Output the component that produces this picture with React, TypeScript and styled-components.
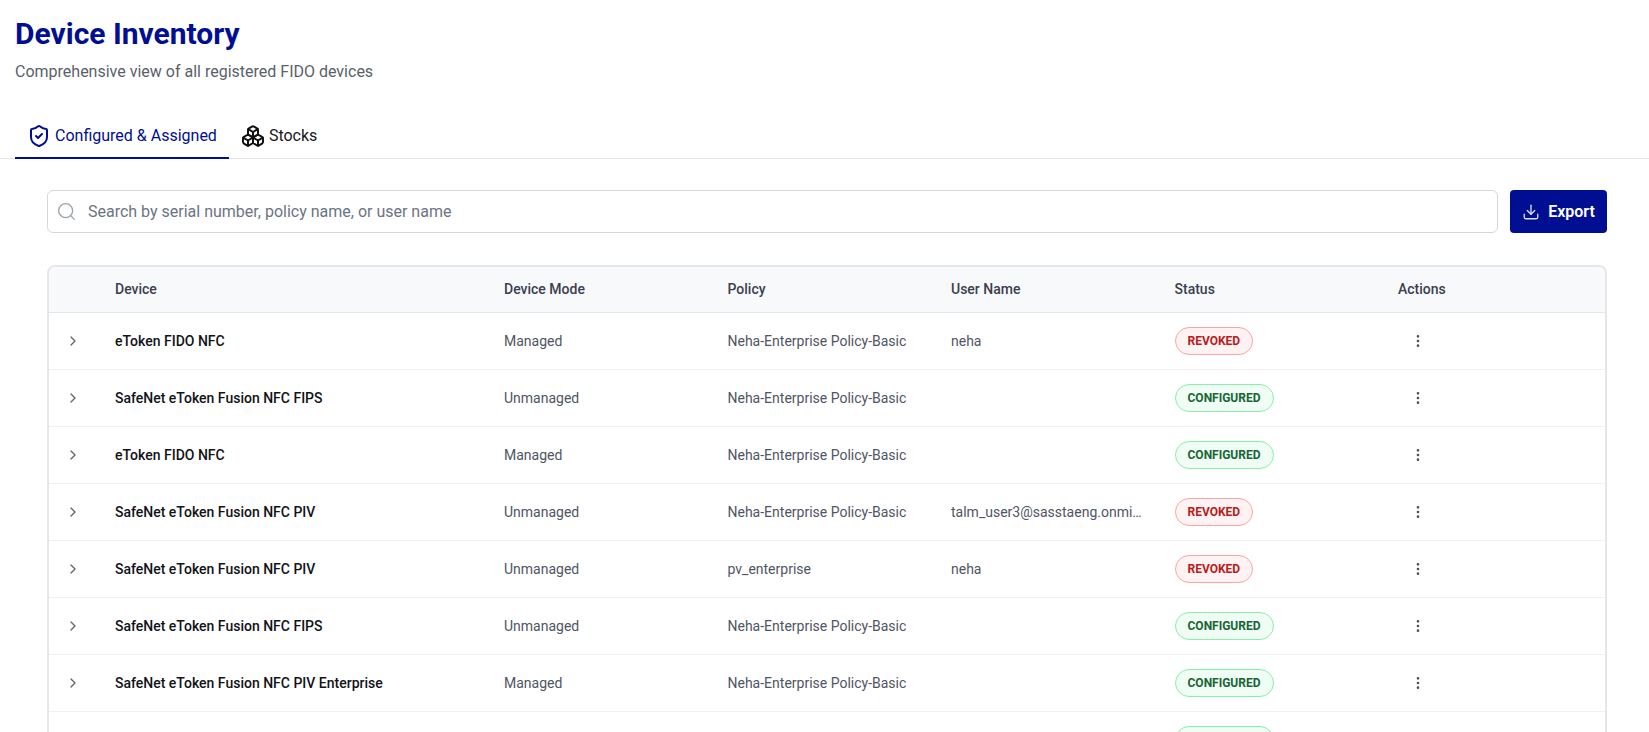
import React from 'react';
import styled, { createGlobalStyle } from 'styled-components';
import { Boxes, ChevronRight, Download, MoreVertical, Search, ShieldCheck } from 'lucide-react';

const GlobalStyle = createGlobalStyle`
  html, body {
    margin: 0;
    height: 100%;
    overflow: hidden;
    background: #fff;
    font-family: Roboto, "Liberation Sans", sans-serif;
  }
`;

const Page = styled.div`
  padding: 16px 0 0;
`;

const PageHeader = styled.div`
  padding: 0 15px;
`;

const Title = styled.h1`
  margin: 0;
  font-size: 30px;
  line-height: 36px;
  font-weight: 700;
  color: #000e92;
`;

const Subtitle = styled.p`
  margin: 8px 0 0;
  font-size: 16px;
  line-height: 24px;
  color: #5a5f6b;
`;

const Tabs = styled.div`
  display: flex;
  margin-top: 27px;
  padding-left: 15px;
  border-bottom: 1px solid #e4e4e7;
`;

const Tab = styled.div<{ $active?: boolean }>`
  display: flex;
  align-items: center;
  gap: 4px;
  height: 48px;
  box-sizing: border-box;
  padding: 3px 12px 0;
  margin-bottom: -1px;
  font-size: 16px;
  color: ${p => (p.$active ? '#000e92' : '#18181b')};
  border-bottom: 2px solid ${p => (p.$active ? '#000e92' : 'transparent')};
`;

const Content = styled.div`
  padding: 31px 42px 0 47px;
`;

const Toolbar = styled.div`
  display: flex;
  gap: 12px;
  margin-bottom: 32px;
`;

const SearchBox = styled.div`
  flex: 1;
  display: flex;
  align-items: center;
  gap: 11px;
  height: 43px;
  box-sizing: border-box;
  padding: 0 8px;
  border: 1.5px solid #d6d7de;
  border-radius: 6px;
  font-size: 16px;
  color: #6b7484;
`;

const ExportButton = styled.button`
  display: flex;
  align-items: center;
  justify-content: center;
  gap: 8px;
  width: 97px;
  height: 43px;
  padding: 0;
  border: 0;
  border-radius: 4px;
  background: #000e92;
  color: #fff;
  font-family: inherit;
  font-size: 16px;
  font-weight: 600;
`;

const Table = styled.div`
  border: 2px solid #e5e6ea;
  border-radius: 8px;
  overflow: hidden;
`;

const columns = '66px 389px 223.5px 223.5px 223.5px 223.5px 1fr';

const HeadRow = styled.div`
  display: grid;
  grid-template-columns: ${columns};
  align-items: center;
  height: 46px;
  box-sizing: border-box;
  padding-bottom: 2px;
  background: #f8f9fb;
  border-bottom: 1px solid #e5e6ea;
  font-size: 14px;
  font-weight: 500;
  color: #3a3f4f;
`;

const Row = styled.div`
  display: grid;
  grid-template-columns: ${columns};
  align-items: center;
  height: 56px;
  border-bottom: 1px solid #f0f1f3;
  font-size: 14px;
  color: #4f5563;
`;

const Expander = styled.div`
  display: flex;
  padding-left: 16px;
  color: #60656f;
`;

const DeviceName = styled.div`
  font-weight: 500;
  color: #111318;
`;

const UserName = styled.div`
  white-space: nowrap;
  overflow: hidden;
  text-overflow: ellipsis;
  padding-right: 32px;
`;

const Badge = styled.span<{ $status: 'REVOKED' | 'CONFIGURED' }>`
  display: inline-flex;
  align-items: center;
  height: 28px;
  box-sizing: border-box;
  padding: 0 12px;
  border-radius: 14px;
  font-size: 12px;
  font-weight: 700;
  color: ${p => (p.$status === 'REVOKED' ? '#b91c1c' : '#166534')};
  background: ${p => (p.$status === 'REVOKED' ? '#fef2f2' : '#f0fdf4')};
  border: 1px solid ${p => (p.$status === 'REVOKED' ? '#fca5a5' : '#86efac')};
`;

const ActionCell = styled.div`
  display: flex;
  padding-left: 12px;
  color: #4b5060;
`;

const BASIC = 'Neha-Enterprise Policy-Basic';

const devices = [
  { name: 'eToken FIDO NFC', mode: 'Managed', policy: BASIC, user: 'neha', status: 'REVOKED' },
  { name: 'SafeNet eToken Fusion NFC FIPS', mode: 'Unmanaged', policy: BASIC, user: '', status: 'CONFIGURED' },
  { name: 'eToken FIDO NFC', mode: 'Managed', policy: BASIC, user: '', status: 'CONFIGURED' },
  { name: 'SafeNet eToken Fusion NFC PIV', mode: 'Unmanaged', policy: BASIC, user: 'talm_user3@sasstaeng.onmicrosoft.com', status: 'REVOKED' },
  { name: 'SafeNet eToken Fusion NFC PIV', mode: 'Unmanaged', policy: 'pv_enterprise', user: 'neha', status: 'REVOKED' },
  { name: 'SafeNet eToken Fusion NFC FIPS', mode: 'Unmanaged', policy: BASIC, user: '', status: 'CONFIGURED' },
  { name: 'SafeNet eToken Fusion NFC PIV Enterprise', mode: 'Managed', policy: BASIC, user: '', status: 'CONFIGURED' },
  { name: 'SafeNet eToken Fusion NFC FIPS', mode: 'Unmanaged', policy: BASIC, user: '', status: 'CONFIGURED' },
] as const;

export default function App() {
  return (
    <Page>
      <GlobalStyle />
      <PageHeader>
        <Title>Device Inventory</Title>
        <Subtitle>Comprehensive view of all registered FIDO devices</Subtitle>
      </PageHeader>

      <Tabs>
        <Tab $active>
          <ShieldCheck size={24} />
          Configured &amp; Assigned
        </Tab>
        <Tab>
          <Boxes size={24} color="#111" />
          Stocks
        </Tab>
      </Tabs>

      <Content>
        <Toolbar>
          <SearchBox>
            <Search size={21} strokeWidth={1.5} color="#9ca3af" />
            Search by serial number, policy name, or user name
          </SearchBox>
          <ExportButton>
            <Download size={18} strokeWidth={1.75} color="#dfe1f2" />
            Export
          </ExportButton>
        </Toolbar>

        <Table>
          <HeadRow>
            <div />
            <div>Device</div>
            <div>Device Mode</div>
            <div>Policy</div>
            <div>User Name</div>
            <div>Status</div>
            <div>Actions</div>
          </HeadRow>
          {devices.map((d, i) => (
            <Row key={i}>
              <Expander>
                <ChevronRight size={16} />
              </Expander>
              <DeviceName>{d.name}</DeviceName>
              <div>{d.mode}</div>
              <div>{d.policy}</div>
              <UserName>{d.user}</UserName>
              <div>
                <Badge $status={d.status}>{d.status}</Badge>
              </div>
              <ActionCell>
                <MoreVertical size={16} />
              </ActionCell>
            </Row>
          ))}
        </Table>
      </Content>
    </Page>
  );
}
